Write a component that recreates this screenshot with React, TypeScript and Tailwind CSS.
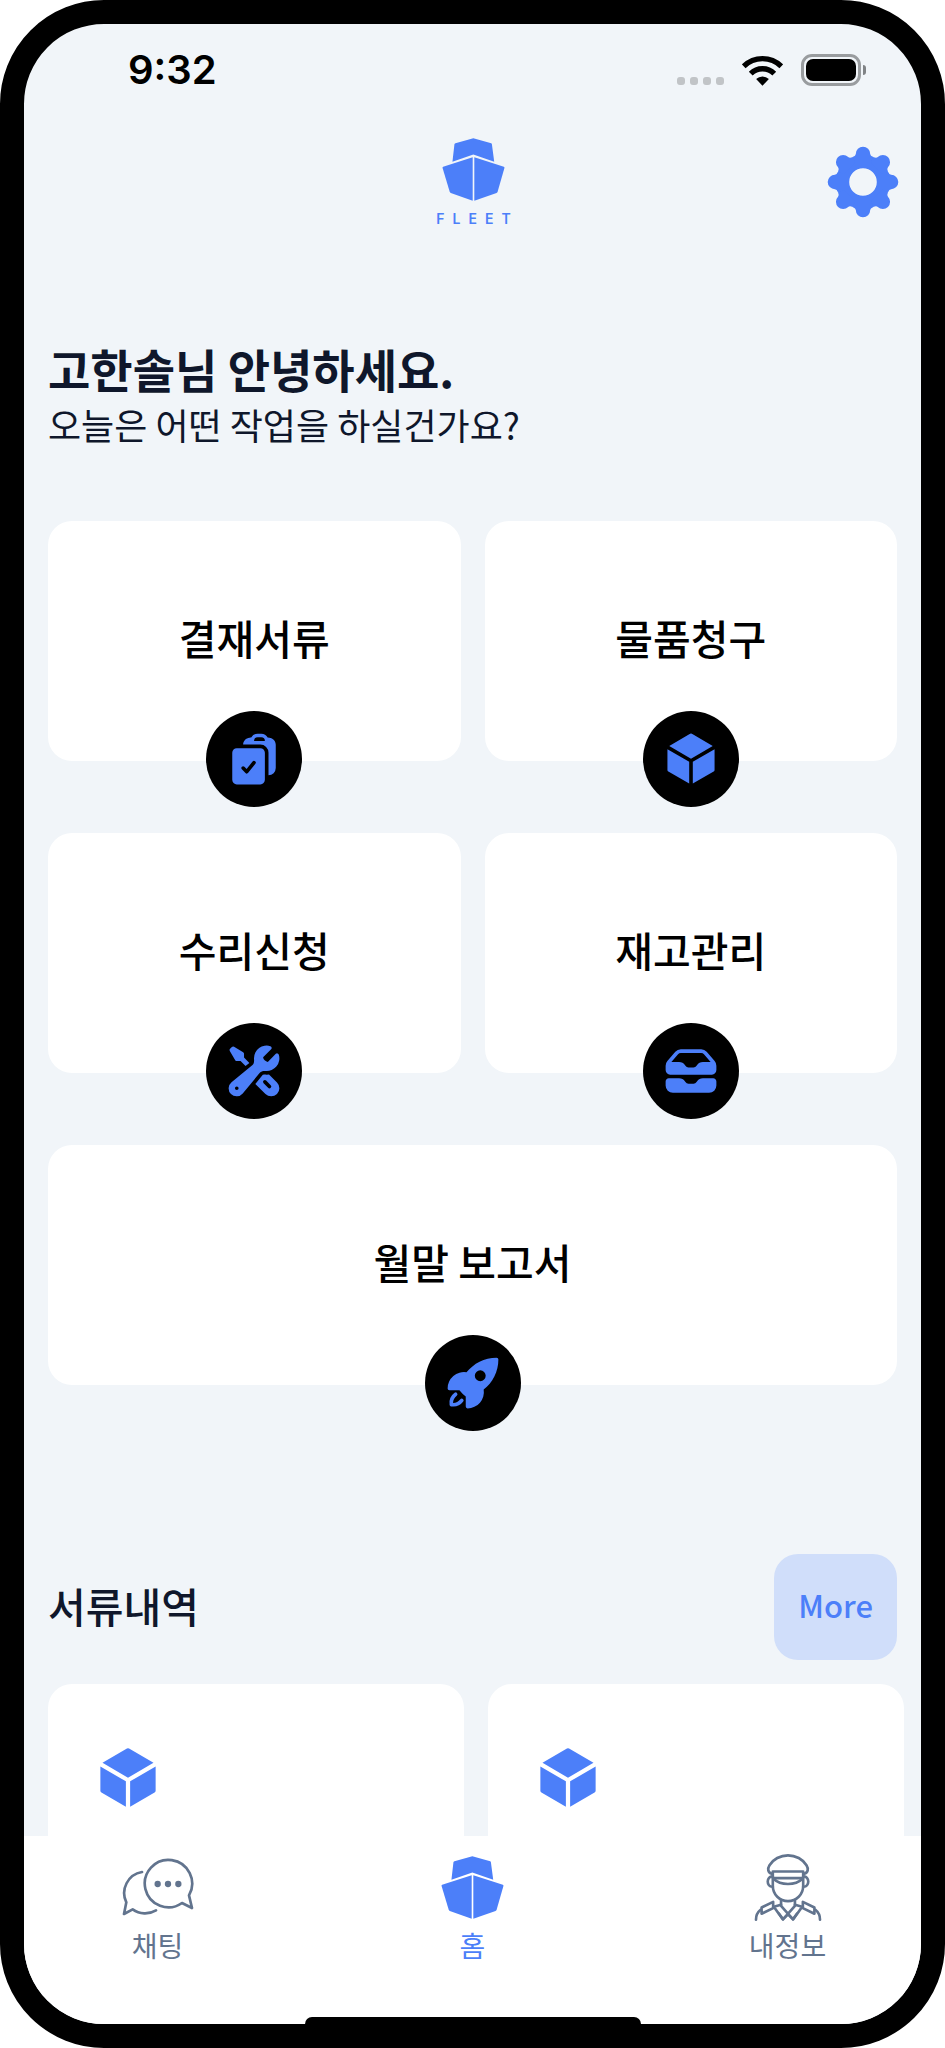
import type { ComponentType, ReactNode } from "react";
import {
  HiClipboardDocumentCheck,
  HiCube,
  HiInboxStack,
  HiRocketLaunch,
  HiWrenchScrewdriver,
} from "react-icons/hi2";

interface MenuItem {
  label: string;
  icon: ComponentType<{ className?: string }>;
  wide?: boolean;
}

const menuItems: MenuItem[] = [
  { label: "결재서류", icon: HiClipboardDocumentCheck },
  { label: "물품청구", icon: HiCube },
  { label: "수리신청", icon: HiWrenchScrewdriver },
  { label: "재고관리", icon: HiInboxStack },
  { label: "월말 보고서", icon: HiRocketLaunch, wide: true },
];

const documents = [{ id: 1 }, { id: 2 }, { id: 3 }];

function ShipIcon() {
  return (
    <svg viewBox="64 54 189 190" className="w-[63px] h-[63px]" fill="currentColor" aria-hidden="true">
      <path d="M104 70 158 55l54 15q2 1 2 3l7 53-63-22-63 22 6-53q0-2 3-3z" />
      <path d="M65 144q0-2 2-3l89-29v131l-66-23q-2-1-3-3z" />
      <path d="M252 144q0-2-2-3l-89-29v131l67-23q2-1 3-3z" />
    </svg>
  );
}

function GearIcon() {
  const angles = [0, 45, 90, 135, 180, 225, 270, 315];
  return (
    <svg viewBox="-36 -36 72 72" className="w-[72px] h-[72px]" fill="currentColor" aria-hidden="true">
      <circle r="20" fill="none" stroke="currentColor" strokeWidth="12.4" />
      {angles.map((a) => (
        <path
          key={a}
          transform={`rotate(${a})`}
          d="M-8-19L-10.4-24.9Q-7.2-26.2-7.2-28.1A7.2 7.2 0 0 1 7.2-28.1Q7.2-26.2 10.4-24.9L8-19Z"
        />
      ))}
    </svg>
  );
}

function ChatIcon() {
  return (
    <svg
      viewBox="366 174 216 174"
      className="w-[72px] h-[58px]"
      fill="none"
      stroke="currentColor"
      strokeWidth="8"
      strokeLinecap="round"
      strokeLinejoin="round"
      aria-hidden="true"
    >
      <path d="M546 309l30 15-9-38a71 71 0 1 0-21 23z" />
      <path d="M426 216a64 64 0 0 0-47 91l-7 35 26-14a64 64 0 0 0 70 3" />
      <g fill="currentColor" stroke="none">
        <circle cx="473" cy="252" r="9.5" />
        <circle cx="504" cy="252" r="9.5" />
        <circle cx="535" cy="252" r="9.5" />
      </g>
    </svg>
  );
}

function OfficerHalf() {
  return (
    <>
      <path d="M877 227c-20-2-21 33 0 31" />
      <path d="M902 300v16l36 41 12-17" />
      <path d="M902 313l-22 6 27 38 16-15" />
      <path d="M843 321l35-17v19l-35 17z" />
      <path d="M826 358c0-13 4-22 14-30" />
    </>
  );
}

function OfficerIcon() {
  return (
    <svg
      viewBox="820 156 206 206"
      className="w-[68px] h-[68px]"
      fill="none"
      stroke="currentColor"
      strokeWidth="8"
      strokeLinecap="round"
      strokeLinejoin="round"
      aria-hidden="true"
    >
      <path d="M874 219c-12-4-14-15-7-26 11-18 33-30 56-30s45 12 56 30c7 11 5 22-7 26" />
      <path d="M877 212h92v20h-92z" />
      <path d="M879 234c22 21 66 21 88 0" />
      <path d="M877 234v22a46 46 0 0 0 92 0v-22" />
      <OfficerHalf />
      <g transform="matrix(-1 0 0 1 1846 0)">
        <OfficerHalf />
      </g>
    </svg>
  );
}

function StatusBar() {
  return (
    <div className="h-[92px] shrink-0 pl-[104px] pr-[55px] flex items-center justify-between text-black">
      <span className="font-['Inter'] text-[40px] leading-none font-semibold">9:32</span>
      <div className="flex items-end gap-[18px]">
        <div className="flex gap-[5px] pb-px">
          {[0, 1, 2, 3].map((dot) => (
            <span key={dot} className="size-2 rounded-[3px] bg-[#c1c4c7]" />
          ))}
        </div>
        <svg viewBox="246 44 122 91" className="w-[41px] h-[31px]" aria-hidden="true">
          <g fill="none" stroke="currentColor" strokeWidth="16">
            <path d="M251 77a80 80 0 0 1 112 0" />
            <path d="M272 99a49 49 0 0 1 70 0" />
          </g>
          <path d="M307 135l-19-20a27 27 0 0 1 38 0z" />
        </svg>
        <div className="flex items-center gap-[2px]">
          <div className="w-[60px] h-8 p-[2px] rounded-[11px] border-[3px] border-[#999c9f]">
            <div className="h-full rounded-[7px] bg-black" />
          </div>
          <div className="w-[3px] h-[10px] rounded-r-full bg-[#808386]" />
        </div>
      </div>
    </div>
  );
}

function Header() {
  return (
    <header className="h-[132px] shrink-0 pl-6 pr-[22px] grid grid-cols-3 items-center text-[#4c7ff9]">
      <span />
      <div className="flex flex-col items-center gap-2 pt-[3px]">
        <ShipIcon />
        <span className="font-['Inter'] pl-2 text-sm leading-5 font-semibold tracking-[8px]">FLEET</span>
      </div>
      <button type="button" aria-label="설정" className="justify-self-end">
        <GearIcon />
      </button>
    </header>
  );
}

function MenuCard({ label, icon: Icon, wide }: MenuItem) {
  return (
    <button
      type="button"
      className={`relative h-60 rounded-3xl bg-white text-black text-[41px] leading-[60px] font-medium ${
        wide ? "col-span-2" : ""
      }`}
    >
      <span className="block pb-2">{label}</span>
      <span className="absolute left-1/2 -bottom-[46px] -translate-x-1/2 size-24 rounded-full bg-black flex items-center justify-center">
        <Icon className="size-[58px] text-[#4c7ff9]" />
      </span>
    </button>
  );
}

function NavItem({ label, active, children }: { label: string; active?: boolean; children: ReactNode }) {
  return (
    <a
      href="#"
      className={`flex flex-col items-center gap-1 ${active ? "text-[#4c7ff9]" : "text-slate-500"}`}
    >
      <span className="h-[68px] flex items-center">{children}</span>
      <span className="text-[28px] leading-10">{label}</span>
    </a>
  );
}

export default function App() {
  return (
    <div className="bg-white">
      <div className="relative h-screen flex flex-col overflow-hidden rounded-[104px] border-[24px] border-black bg-slate-100 text-slate-900 font-['Noto_Sans_CJK_KR',sans-serif]">
        <StatusBar />
        <Header />

        <main className="flex-1 min-h-0 overflow-hidden px-6 pt-[97px]">
          <h1 className="text-[46px] leading-[46px] font-bold">고한솔님 안녕하세요.</h1>
          <p className="mt-2 text-4xl leading-[50px]">오늘은 어떤 작업을 하실건가요?</p>

          <section className="mt-[72px] grid grid-cols-2 gap-x-6 gap-y-[72px]">
            {menuItems.map((item) => (
              <MenuCard key={item.label} {...item} />
            ))}
          </section>

          <section className="mt-[169px]">
            <div className="flex items-center justify-between">
              <h2 className="pb-1 text-[41px] leading-[60px] font-medium">서류내역</h2>
              <button
                type="button"
                className="h-[106px] px-6 pb-1 rounded-3xl bg-[#d0defa] text-[#4c7ff9] text-[31px] font-medium"
              >
                More
              </button>
            </div>
            <div className="mt-6 -mr-6 flex gap-6 overflow-hidden">
              {documents.map((doc) => (
                <article key={doc.id} className="w-[416px] h-60 shrink-0 rounded-3xl bg-white pl-[46px] pt-[60px]">
                  <HiCube className="size-[68px] text-[#4c7ff9]" />
                </article>
              ))}
            </div>
          </section>
        </main>

        {/* bottom tabs run under the side bezels */}
        <nav className="-mx-6 h-[188px] shrink-0 pt-[17px] grid grid-cols-3 items-start bg-white">
          <NavItem label="채팅">
            <ChatIcon />
          </NavItem>
          <NavItem label="홈" active>
            <ShipIcon />
          </NavItem>
          <NavItem label="내정보">
            <OfficerIcon />
          </NavItem>
        </nav>
        <div className="absolute bottom-0 left-1/2 -translate-x-1/2 w-[336px] h-[7px] rounded-t-[7px] bg-black" />
      </div>
    </div>
  );
}
